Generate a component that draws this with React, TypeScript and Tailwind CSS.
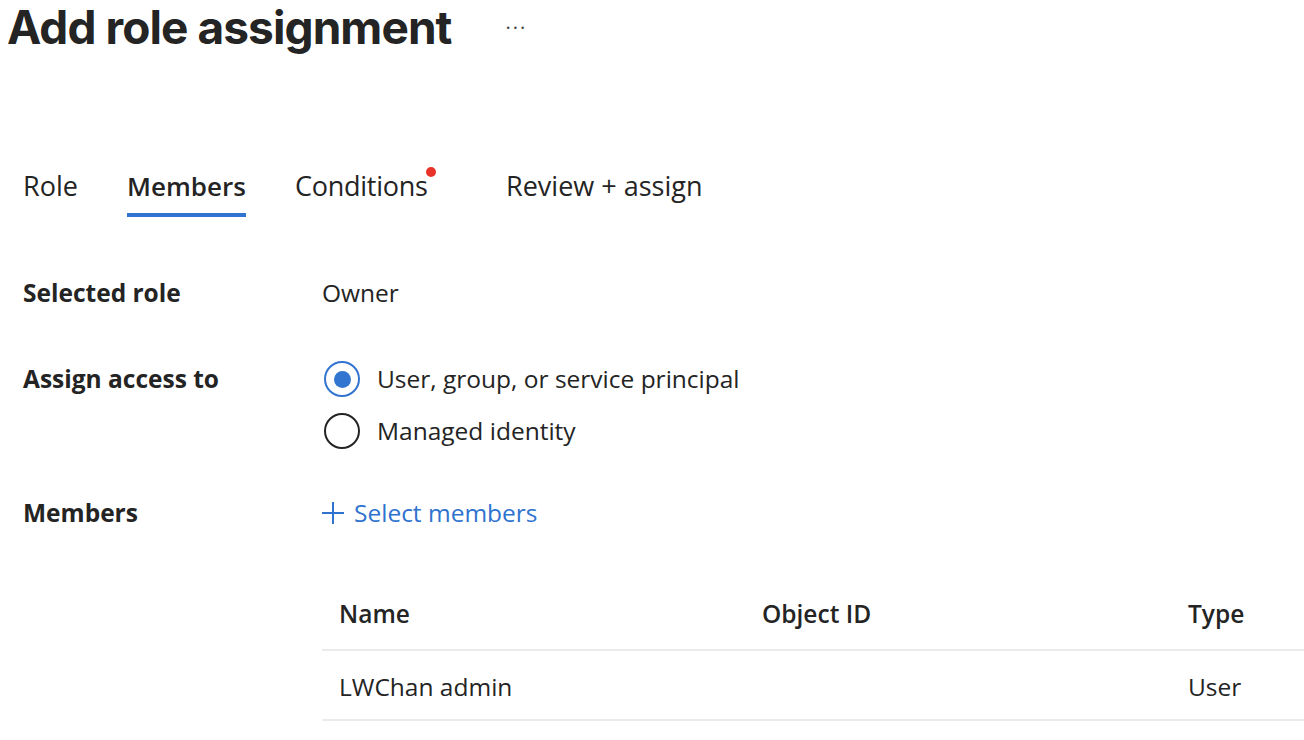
import React from 'react';

const body = "font-['Open_Sans',sans-serif]";

function Radio({ checked, label }: { checked?: boolean; label: string }) {
  return (
    <div className="flex items-center h-[52px]">
      <span
        className={
          'ml-[2px] flex items-center justify-center w-[36px] h-[36px] rounded-full border-2 ' +
          (checked ? 'border-[#3275d0]' : 'border-[#242424]')
        }
      >
        {checked && <span className="block w-[17px] h-[17px] rounded-full bg-[#3275d0]" />}
      </span>
      <span className="ml-[17px] text-[24.5px] text-[#242424]">{label}</span>
    </div>
  );
}

export default function App() {
  return (
    <div className={`min-h-screen bg-white text-[#242424] ${body}`}>
      <div className="flex items-center pl-[7px] h-[54px]">
        <h1 className="font-['Inter',sans-serif] font-bold text-[46px] leading-none tracking-[-0.02em] text-[#242424]">
          Add role assignment
        </h1>
        <span className="ml-[54px] text-[20px] text-[#444] tracking-[2px] mt-[1px]">···</span>
      </div>

      <div className="flex items-end h-[163px] pl-[23px]">
        <div className="w-[104px] h-[60px] flex items-start pt-[9px] text-[27px]">Role</div>
        <div className="w-[168px] h-[60px] flex items-start">
          <span className="pt-[10px] h-[60px] border-b-4 border-[#3173d0] font-semibold text-[26px]">Members</span>
        </div>
        <div className="w-[211px] h-[60px] flex items-start pt-[9px] text-[27px]">
          <span className="relative tracking-[-0.01em]">
            Conditions
            <span className="absolute -right-[8px] top-[1px] w-[10px] h-[10px] rounded-full bg-[#e8332b]" />
          </span>
        </div>
        <div className="h-[60px] flex items-start pt-[9px] text-[27px]">Review + assign</div>
      </div>

      <div className="pl-[23px] mt-[51px]">
        <div className="flex items-center h-[50px]">
          <div className="w-[299px] font-bold text-[24.5px]">Selected role</div>
          <div className="text-[24.5px]">Owner</div>
        </div>

        <div className="flex mt-[35px]">
          <div className="w-[299px] font-bold text-[24.5px] h-[52px] flex items-center">Assign access to</div>
          <div className="flex flex-col">
            <Radio checked label="User, group, or service principal" />
            <Radio label="Managed identity" />
          </div>
        </div>

        <div className="flex items-center h-[50px] mt-[31px]">
          <div className="w-[299px] font-bold text-[24.5px]">Members</div>
          <div className="flex items-center text-[24.5px] text-[#2f73cf]">
            <svg width="22" height="22" viewBox="0 0 22 22" className="mr-[10px] -mt-[1px]">
              <path d="M11 0v22M0 11h22" stroke="#2f73cf" strokeWidth="2" fill="none" />
            </svg>
            Select members
          </div>
        </div>

        <div className="ml-[299px] mt-[42px]">
          <div className="grid grid-cols-[423px_426px_1fr] items-center h-[71px] border-b-2 border-[#ebebeb] font-semibold text-[24.5px]">
            <div className="pl-[17px]">Name</div>
            <div className="pl-[17px]">Object ID</div>
            <div className="pl-[17px]">Type</div>
          </div>
          <div className="grid grid-cols-[423px_426px_1fr] items-center h-[70px] pt-[4px] border-b-2 border-[#ebebeb] text-[24.5px]">
            <div className="pl-[17px]">LWChan admin</div>
            <div className="pl-[17px]"></div>
            <div className="pl-[17px]">User</div>
          </div>
        </div>
      </div>
    </div>
  );
}
